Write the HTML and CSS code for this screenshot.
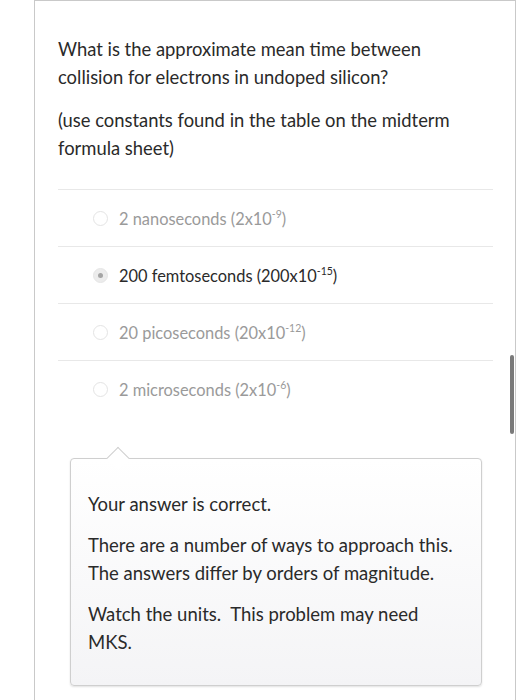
FILE: index.html
```html
<!DOCTYPE html>
<html>
<head>
<meta charset="utf-8">
<link rel="stylesheet" href="styles.css">
</head>
<body>
<div class="card">
  <div class="question">
    <p>What is the approximate mean time between collision for electrons in undoped silicon?</p>
    <p>(use constants found in the table on the midterm formula sheet)</p>
  </div>
  <ul class="options">
    <li class="option"><span class="radio"></span><span class="label">2 nanoseconds (2x10<sup>-9</sup>)</span></li>
    <li class="option selected"><span class="radio"></span><span class="label">200 femtoseconds (200x10<sup>-15</sup>)</span></li>
    <li class="option"><span class="radio"></span><span class="label">20 picoseconds (20x10<sup>-12</sup>)</span></li>
    <li class="option"><span class="radio"></span><span class="label">2 microseconds (2x10<sup>-6</sup>)</span></li>
  </ul>
  <div class="feedback">
    <p>Your answer is correct.</p>
    <p>There are a number of ways to approach this. The answers differ by orders of magnitude.</p>
    <p>Watch the units.&nbsp; This problem may need MKS.</p>
  </div>
</div>
<div class="scrollbar"></div>
</body>
</html>
```
FILE: styles.css
```css
html, body {
  margin: 0;
  padding: 0;
  background: #fff;
}
body {
  font-family: Lato, "Liberation Sans", sans-serif;
  color: #2d3b45;
  width: 518px;
  height: 700px;
  overflow: hidden;
  position: relative;
}
.card {
  margin-left: 34px;
  width: 482px;
  height: 720px;
  border: 1px solid #c9c9c9;
  box-sizing: border-box;
  padding: 34px 22px 0 23px;
}
.question {
  padding-right: 20px;
}
.question p {
  margin: 0 0 15px;
  font-size: 18.4px;
  line-height: 28px;
  color: #2a2a2a;
}
.question p:last-child {
  margin-bottom: 0;
}
.options {
  list-style: none;
  margin: 27px 0 0;
  padding: 0;
}
.option {
  display: flex;
  align-items: center;
  height: 56px;
  border-top: 1px solid #e8e8e8;
  padding-left: 35px;
  font-size: 16.4px;
  color: #9a9a9a;
}
.option .radio {
  width: 15px;
  height: 15px;
  border-radius: 50%;
  border: 1px solid #e4e4e4;
  background: #fff;
  margin-right: 11px;
  box-sizing: border-box;
  flex: none;
  display: flex;
  align-items: center;
  justify-content: center;
}
.option.selected {
  color: #2a2a2a;
}
.option.selected .radio {
  background: #ececec;
  border-color: #e6e6e6;
}
.option.selected .radio::after {
  content: "";
  width: 5px;
  height: 5px;
  border-radius: 50%;
  background: #a5a5a5;
}
.label sup {
  font-size: 10.5px;
  vertical-align: 7px;
  line-height: 0;
}
.feedback {
  position: relative;
  margin: 41px 11px 0 12px;
  border: 1px solid #cfcfcf;
  border-radius: 4px;
  background: linear-gradient(#ffffff, #f4f4f6);
  box-shadow: 0 1px 2px rgba(0,0,0,0.12);
  padding: 31px 20px 29px 17px;
}
.feedback::before {
  content: "";
  position: absolute;
  left: 39px;
  width: 15px;
  height: 15px;
  background: #fff;
  border-top: 1px solid #cfcfcf;
  border-left: 1px solid #cfcfcf;
  transform: rotate(45deg);
  top: -9px;
}
.feedback p {
  margin: 0 0 13px;
  font-size: 18.5px;
  line-height: 28px;
  color: #2a2a2a;
}
.feedback p:last-child {
  margin-bottom: 0;
}
.scrollbar {
  position: absolute;
  left: 510px;
  top: 355px;
  width: 4px;
  height: 79px;
  border-radius: 2px;
  background: #7a7a7a;
}
```
